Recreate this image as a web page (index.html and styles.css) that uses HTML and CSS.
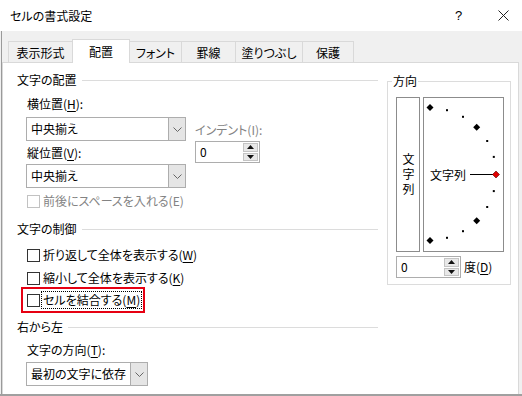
FILE: index.html
```html
<!DOCTYPE html>
<html lang="ja">

<head>
    <meta charset="UTF-8">
    <meta name="viewport" content="width=device-width, initial-scale=1.0">
    <title>セルの書式設定</title>

    <link rel="stylesheet" href="styles.css">
</head>

<body>
    <div class="titlebar">
        <span class="title">セルの書式設定</span>
        <span class="help">?</span>
        <svg class="close" width="11" height="11" viewBox="0 0 11 11">
            <path d="M0.5 0.5 10.5 10.5 M10.5 0.5 0.5 10.5" stroke="#222" stroke-width="1" fill="none" />
        </svg>
    </div>

    <!-- tabs -->
    <div class="tabs">
        <div class="tab tab_1">表示形式</div>
        <div class="tab active tab_2">配置</div>
        <div class="tab tab_3">フォント</div>
        <div class="tab tab_4">罫線</div>
        <div class="tab tab_5">塗りつぶし</div>
        <div class="tab tab_6">保護</div>
    </div>

    <div class="panel">
        <div class="col_left">

            <!-- ==== 文字の配置 ==== -->
            <div class="group_head"><span>文字の配置</span><i class="rule"></i></div>

            <div class="align_grid">
                <div class="align_left">
                    <div class="label">横位置(<u>H</u>):</div>
                    <div class="combo combo_wide combo_1">
                        <span class="combo_text">中央揃え</span>
                        <b class="drop"><svg width="9" height="5" viewBox="0 0 9 5"><path d="M0.5 0.5 4.5 4.5 8.5 0.5" fill="none" stroke="#666" /></svg></b>
                    </div>
                    <div class="label label_2">縦位置(<u>V</u>):</div>
                    <div class="combo combo_wide combo_2">
                        <span class="combo_text">中央揃え</span>
                        <b class="drop"><svg width="9" height="5" viewBox="0 0 9 5"><path d="M0.5 0.5 4.5 4.5 8.5 0.5" fill="none" stroke="#666" /></svg></b>
                    </div>
                </div>

                <div class="indent">
                    <div class="label disabled">インデント(I):</div>
                    <div class="spin">
                        <span class="spin_text">0</span>
                        <div class="spin_btns">
                            <b><svg width="7" height="4" viewBox="0 0 7 4"><path d="M0 4 3.5 0 7 4z" fill="#111" /></svg></b>
                            <b><svg width="7" height="4" viewBox="0 0 7 4"><path d="M0 0 3.5 4 7 0z" fill="#111" /></svg></b>
                        </div>
                    </div>
                </div>
            </div>

            <div class="check disabled check_space"><i class="box"></i><span>前後にスペースを入れる(E)</span></div>

            <!-- ==== 文字の制御 ==== -->
            <div class="group_head head_2"><span>文字の制御</span><i class="rule"></i></div>

            <div class="check check_wrap"><i class="box"></i><span>折り返して全体を表示する(<u>W</u>)</span></div>
            <div class="check check_shrink"><i class="box"></i><span>縮小して全体を表示する(<u>K</u>)</span></div>
            <div class="highlight">
                <div class="check"><i class="box"></i><span class="focus">セルを結合する(<u>M</u>)</span></div>
            </div>

            <!-- ==== 右から左 ==== -->
            <div class="group_head head_3"><span>右から左</span><i class="rule"></i></div>

            <div class="label label_dir">文字の方向(<u>T</u>):</div>
            <div class="combo combo_dir">
                <span class="combo_text">最初の文字に依存</span>
                <b class="drop"><svg width="9" height="5" viewBox="0 0 9 5"><path d="M0.5 0.5 4.5 4.5 8.5 0.5" fill="none" stroke="#666" /></svg></b>
            </div>
        </div>

        <!-- ==== 方向 ==== -->
        <fieldset class="orient">
            <legend>方向</legend>
            <div class="orient_row">
                <div class="vbox"><span>文字列</span></div>
                <div class="obox">
                    <svg class="dial" width="79" height="153" viewBox="0 0 79 153">
                        <g fill="#000">
                            <polygon points="6,6 9.5,9.5 6,13 2.5,9.5" />
                            <rect x="22" y="11.2" width="2" height="2" />
                            <rect x="38" y="17.8" width="2" height="2" />
                            <polygon points="52.7,25.8 56.2,29.3 52.7,32.8 49.2,29.3" />
                            <rect x="62.2" y="42" width="2" height="2" />
                            <rect x="68.8" y="57.9" width="2" height="2" />
                            <rect x="68.8" y="92.1" width="2" height="2" />
                            <rect x="62.2" y="108" width="2" height="2" />
                            <polygon points="52.7,119.2 56.2,122.7 52.7,126.2 49.2,122.7" />
                            <rect x="38" y="132.2" width="2" height="2" />
                            <rect x="22" y="138.8" width="2" height="2" />
                            <polygon points="6,139 9.5,142.5 6,146 2.5,142.5" />
                        </g>
                        <line x1="46" y1="76.5" x2="69" y2="76.5" stroke="#000" stroke-width="1" />
                        <polygon points="72,73 75.5,76.5 72,80 68.5,76.5" fill="#e00000" stroke="#500" stroke-width="0.6" />
                    </svg>
                    <span class="otext">文字列</span>
                </div>
            </div>
            <div class="degree_row">
                <div class="spin">
                    <span class="spin_text">0</span>
                    <div class="spin_btns">
                        <b><svg width="7" height="4" viewBox="0 0 7 4"><path d="M0 4 3.5 0 7 4z" fill="#111" /></svg></b>
                        <b><svg width="7" height="4" viewBox="0 0 7 4"><path d="M0 0 3.5 4 7 0z" fill="#111" /></svg></b>
                    </div>
                </div>
                <span class="degree">度(<u>D</u>)</span>
            </div>
        </fieldset>
    </div>
    <div class="bottom_line"></div>
</body>

</html>
```

FILE: styles.css
```css
* {
    box-sizing: border-box;
    font-family: "Noto Sans CJK JP", sans-serif;
    font-feature-settings: "palt";
}

body {
    margin: 0;
    width: 522px;
    height: 396px;
    overflow: hidden;
    /* dialog edge line on the left */
    background: linear-gradient(to right, #f0f0f0 1px, #9a9a9a 1px, #9a9a9a 2px, #f0f0f0 2px);
    font-size: 12px;
    line-height: 16px;
    color: #000;
}

u {
    text-decoration-thickness: 1px;
    text-underline-offset: 2px;
}

/* ==== title bar ==== */

.titlebar {
    height: 31px;
    background-color: #fff;
    display: flex;
    align-items: center;
    padding-left: 10px;
}

.title {
    flex: 1;
}

.help {
    width: 10px;
    margin-right: 33px;
    font-family: "Liberation Sans", sans-serif;
    font-size: 13px;
}

.close {
    margin-right: 13px;
}

/* ==== tabs ==== */

.tabs {
    display: flex;
    align-items: flex-end;
    height: 24px;
    margin-top: 8px;
    padding-left: 8px;
}

.tab {
    height: 21px;
    margin-bottom: 1px;
    margin-left: -1px;
    border: 1px solid #d9d9d9;
    border-bottom: none;
    background-color: #f0f0f0;
    display: flex;
    align-items: center;
    justify-content: center;
    padding-top: 2px;
}

.tab_1 { width: 65px; margin-left: 0; }
.tab_2 { width: 58px; }
.tab_3 { width: 53px; }
.tab_4 { width: 55px; }
.tab_5 { width: 68px; }
.tab_6 { width: 52px; }

.tab.active {
    height: 24px;
    margin-bottom: 0;
    background-color: #fff;
    padding-top: 0;
}

/* ==== panel ==== */

.panel {
    display: flex;
    align-items: flex-start;
    width: 517px;
    height: 332px;
    margin-top: -1px;
    margin-left: 2px;
    padding: 9px 0 0 14px;
    background-color: #fff;
    border: 1px solid #d9d9d9;
    border-bottom: none;
}

.bottom_line {
    height: 2px;
    background-color: #a0a0a0;
}

.col_left {
    width: 361px;
}

.group_head {
    display: flex;
    align-items: center;
    height: 16px;
}

.rule {
    flex: 1;
    height: 1px;
    margin-left: 5px;
    margin-top: 1px;
    background-color: #dcdcdc;
}

.head_2 { margin-top: 12px; }
.head_3 { margin-top: 6px; }

.label {
    height: 16px;
    margin-left: 10px;
}

.disabled {
    color: #838383;
}

/* ==== 文字の配置 ==== */

.align_grid {
    display: flex;
    margin-top: 8px;
}

.align_left {
    width: 169px;
    padding-left: 9px;
}

.align_left .label {
    margin-left: 1px;
}

.label_2 {
    margin-top: 4px;
}

.combo {
    display: flex;
    align-items: stretch;
    height: 24px;
    border: 1px solid #adadad;
    background-color: #fff;
}

.combo_wide {
    width: 160px;
}

.combo_1 { margin-top: 5px; }
.combo_2 { margin-top: 3px; }

.combo_text {
    flex: 1;
    padding-left: 4px;
    display: flex;
    align-items: center;
}

.drop {
    width: 17px;
    border-left: 1px solid #adadad;
    background-color: #e5e5e5;
    display: flex;
    align-items: center;
    justify-content: center;
}

.indent {
    margin-left: 9px;
}

.indent .label {
    margin-left: 0;
    margin-top: 26px;
}

.spin {
    display: flex;
    width: 65px;
    height: 22px;
    margin-top: 3px;
    border: 1px solid #adadad;
    background-color: #fff;
}

.spin_text {
    flex: 1;
    padding-left: 4px;
    display: flex;
    align-items: center;
}

.spin_btns {
    display: flex;
    flex-direction: column;
    gap: 1px;
    padding: 1px;
}

.spin_btns b {
    width: 15px;
    height: 9px;
    border: 1px solid #c4c4c4;
    background-color: #e8e8e8;
    display: flex;
    align-items: center;
    justify-content: center;
}

/* ==== checkboxes ==== */

.check {
    display: flex;
    align-items: center;
    height: 16px;
    margin-left: 10px;
}

.box {
    width: 13px;
    height: 13px;
    margin-right: 3px;
    border: 1px solid #333;
    background-color: #fff;
}

.check.disabled .box {
    border-color: #c2c2c2;
}

.check_space { margin-top: 5px; }
.check_wrap { margin-top: 10px; }
.check_shrink { margin-top: 7px; }

.highlight {
    display: flex;
    align-items: center;
    width: 124px;
    height: 26px;
    margin-top: 1px;
    margin-left: 4px;
    padding-left: 4px;
    border: 2px solid #e60012;
}

.highlight .check {
    margin-left: 0;
}

.focus {
    outline: 1px dotted #000;
    outline-offset: 0;
    padding: 0 1px;
    margin-left: -1px;
}

/* ==== 右から左 ==== */

.label_dir {
    margin-top: 7px;
}

.combo_dir {
    width: 122px;
    margin-top: 4px;
    margin-left: 9px;
}

/* ==== 方向 ==== */

.orient {
    width: 124px;
    margin: 1px 0 0 9px;
    padding: 0 0 6px 8px;
    border: 1px solid #dcdcdc;
}

.orient legend {
    padding: 0 1px;
    margin-left: -4px;
    line-height: 16px;
}

.orient_row {
    display: flex;
    gap: 3px;
    margin-top: 8px;
}

.vbox {
    width: 24px;
    height: 155px;
    border: 1px solid #8c8c8c;
    display: flex;
    align-items: center;
    justify-content: center;
}

.vbox span {
    writing-mode: vertical-rl;
    letter-spacing: 3px;
    line-height: 12px;
    padding-top: 2px;
}

.obox {
    position: relative;
    width: 81px;
    height: 155px;
    border: 1px solid #8c8c8c;
    display: flex;
    align-items: center;
    padding-left: 6px;
}

.dial {
    position: absolute;
    left: 0;
    top: 0;
}

.otext {
    background-color: #fff;
}

.degree_row {
    display: flex;
    align-items: center;
    margin-top: 4px;
}

.degree_row .spin {
    margin-top: 0;
}

.degree {
    margin-left: 3px;
}
```
